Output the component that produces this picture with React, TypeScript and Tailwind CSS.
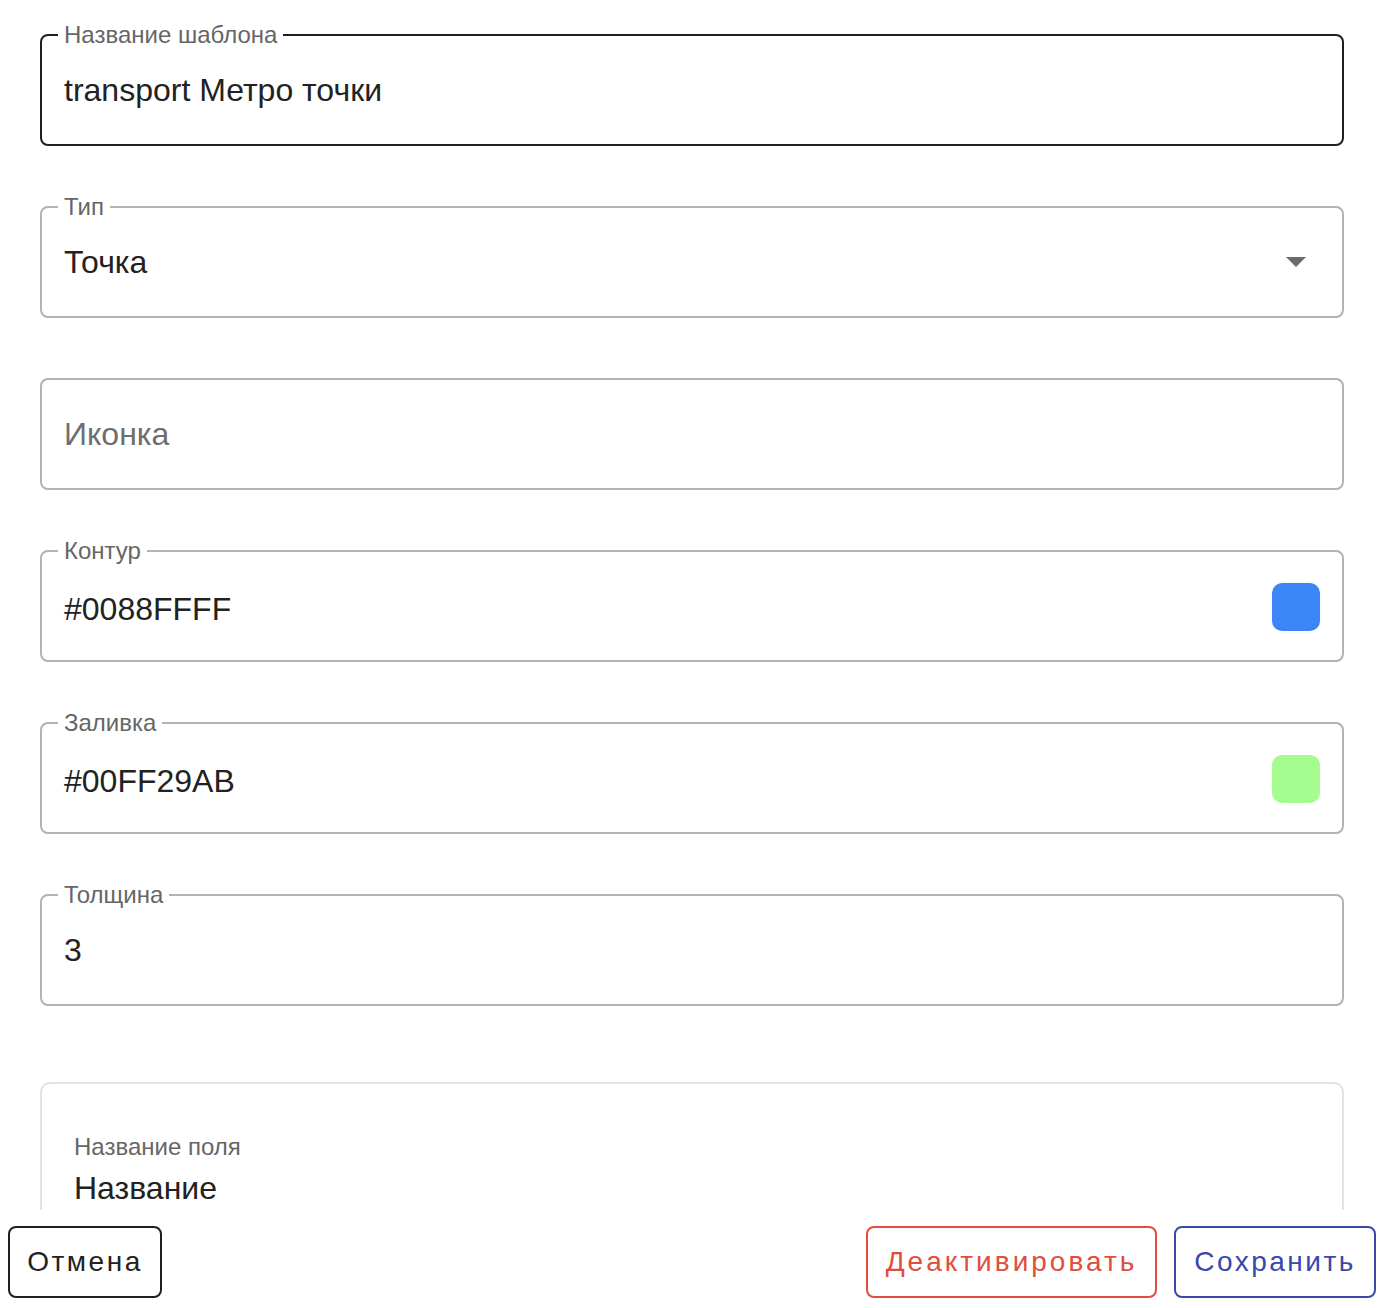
import { ReactNode } from "react";

type FieldProps = {
  label?: string;
  value?: string;
  placeholder?: string;
  focused?: boolean;
  right?: ReactNode;
};

function OutlinedField({ label, value, placeholder, focused, right }: FieldProps) {
  const border = focused ? "border-[#1f1f1f]" : "border-[#b3b3b3]";
  return (
    <fieldset className={`h-[125px] rounded-[8px] border-2 ${border} px-[16px] m-0 min-w-0`}>
      {label ? (
        <legend className="px-[6px] text-[24px] leading-[28px] text-[#666666]">{label}</legend>
      ) : (
        <legend className="w-0 p-0 overflow-hidden text-[24px] leading-[28px]">&nbsp;</legend>
      )}
      <div className="flex items-center pl-[6px] pr-[6px] pt-[22px]">
        <div className={`flex-1 text-[32px] leading-[38px] ${value ? "text-[#222222]" : "text-[#6e6e6e]"}`}>
          {value || placeholder}
        </div>
        {right}
      </div>
    </fieldset>
  );
}

function Swatch({ color }: { color: string }) {
  return <div className={`w-[48px] h-[48px] -mt-[4px] rounded-[10px] ${color}`} />;
}

export default function App() {
  return (
    <div className="h-[1308px] flex flex-col bg-white font-[family-name:Liberation_Sans,Arial,sans-serif]">
      <div className="flex-1 overflow-hidden px-[40px] pt-[21px]">
        <div className="flex flex-col gap-[47px]">
          <OutlinedField label="Название шаблона" value="transport Метро точки" focused />
          <OutlinedField
            label="Тип"
            value="Точка"
            right={
              <svg width="20" height="10" viewBox="0 0 20 10" className="mr-[14px]">
                <path d="M0 0 L20 0 L10 10 Z" fill="#6b6b6b" />
              </svg>
            }
          />
          <OutlinedField placeholder="Иконка" />
          <OutlinedField label="Контур" value="#0088FFFF" right={<Swatch color="bg-[#3b86f6]" />} />
          <OutlinedField label="Заливка" value="#00FF29AB" right={<Swatch color="bg-[#a6fd8f]" />} />
          <OutlinedField label="Толщина" value="3" />
        </div>
        {/* field list card, continues below the fold */}
        <div className="mt-[76px] rounded-[10px] border-2 border-[#e2e2e2] px-[32px] pt-[48px] pb-[80px]">
          <div className="text-[24px] leading-[30px] text-[#666666]">Название поля</div>
          <div className="text-[32px] leading-[40px] text-[#222222] mt-[6px]">Название</div>
        </div>
      </div>
      <div className="h-[98px] flex items-start justify-between px-[8px] pt-[16px]">
        <button className="w-[154px] h-[72px] rounded-[8px] border-2 border-[#1f1f1f] text-[28px] tracking-[2.5px] text-[#222222]">
          Отмена
        </button>
        <div className="flex gap-[17px]">
          <button className="w-[291px] h-[72px] rounded-[8px] border-2 border-[#e04e3c] text-[28px] tracking-[3px] text-[#e04e3c]">
            Деактивировать
          </button>
          <button className="w-[202px] h-[72px] rounded-[8px] border-2 border-[#3949ab] text-[28px] tracking-[2.5px] text-[#3949ab]">
            Сохранить
          </button>
        </div>
      </div>
    </div>
  );
}
